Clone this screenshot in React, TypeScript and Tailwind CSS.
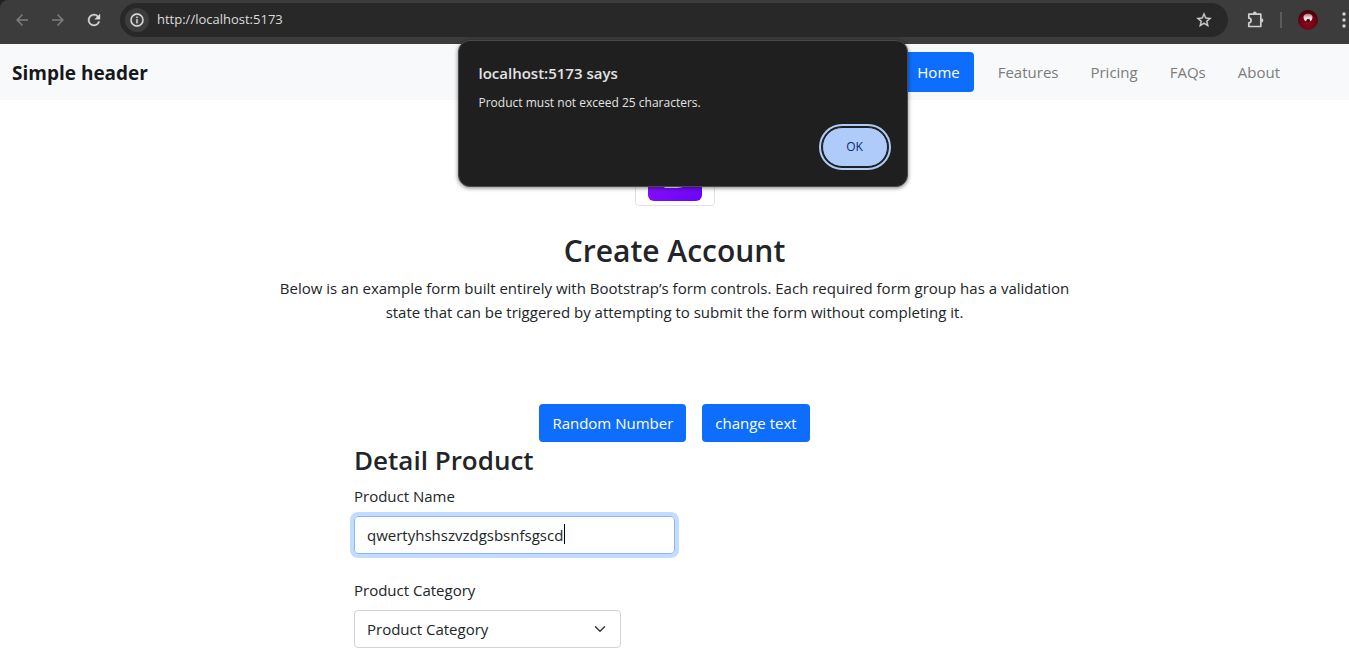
import { useState } from "react";

const navItems = ["Home", "Features", "Pricing", "FAQs", "About"];

function BackIcon() {
  return (
    <svg viewBox="0 0 24 24" className="size-[18px] fill-[#7d7d7d]" aria-hidden="true">
      <path d="M20 11H7.83l5.59-5.59L12 4l-8 8 8 8 1.41-1.41L7.83 13H20v-2z" />
    </svg>
  );
}

function ForwardIcon() {
  return (
    <svg viewBox="0 0 24 24" className="size-[18px] fill-[#7d7d7d]" aria-hidden="true">
      <path d="M12 4l-1.41 1.41L16.17 11H4v2h12.17l-5.58 5.59L12 20l8-8z" />
    </svg>
  );
}

function ReloadIcon() {
  return (
    <svg viewBox="0 0 24 24" className="size-[18px] fill-[#d8d8d8]" aria-hidden="true">
      <path d="M17.65 6.35A7.96 7.96 0 0 0 12 4a8 8 0 1 0 7.73 10h-2.08A6 6 0 1 1 12 6c1.66 0 3.14.69 4.22 1.78L13 11h7V4l-2.35 2.35z" stroke="#d8d8d8" strokeWidth="0.5" />
    </svg>
  );
}

function InfoIcon() {
  return (
    <svg viewBox="0 0 24 24" className="size-4 fill-[#dedede]" aria-hidden="true">
      <path d="M11 7h2v2h-2zm0 4h2v6h-2zm1-9a10 10 0 1 0 0 20 10 10 0 0 0 0-20zm0 18a8 8 0 1 1 0-16 8 8 0 0 1 0 16z" stroke="#dedede" strokeWidth="0.4" />
    </svg>
  );
}

function StarIcon() {
  return (
    <svg viewBox="0 0 24 24" className="size-[18px] fill-[#cfcfcf]" aria-hidden="true">
      <path d="M22 9.24l-7.19-.62L12 2 9.19 8.63 2 9.24l5.46 4.73L5.82 21 12 17.27 18.18 21l-1.63-7.03L22 9.24zM12 15.4l-3.76 2.27 1-4.28-3.32-2.88 4.38-.38L12 6.1l1.71 4.04 4.38.38-3.32 2.88 1 4.28L12 15.4z" stroke="#cfcfcf" strokeWidth="0.4" />
    </svg>
  );
}

function PuzzleIcon() {
  return (
    <svg viewBox="0 0 20 20" className="size-5" aria-hidden="true">
      <path
        d="M2.8 4.2h12v12.3h-12v-3.7a2.3 2.3 0 0 0 0-4.6z"
        fill="none"
        stroke="#cfcfcf"
        strokeWidth="1.7"
        strokeLinejoin="round"
      />
      <path d="M6.8 4a2 2.4 0 0 1 4 0zM15.2 8.3a2.2 2.1 0 0 1 0 4.2z" fill="#cfcfcf" />
    </svg>
  );
}

function AvatarIcon() {
  return (
    <svg viewBox="0 0 20 20" className="size-5" aria-hidden="true">
      <defs>
        <radialGradient id="orb" cx="50%" cy="65%" r="60%">
          <stop offset="0" stopColor="#8e0a1e" />
          <stop offset="0.7" stopColor="#6b0314" />
          <stop offset="1" stopColor="#42020b" />
        </radialGradient>
        <linearGradient id="shine" x1="0" y1="0" x2="0" y2="1">
          <stop offset="0" stopColor="#a8717c" />
          <stop offset="0.6" stopColor="#f4e6e8" />
        </linearGradient>
      </defs>
      <circle cx="10" cy="10" r="10" fill="url(#orb)" />
      <path d="M5.5 7C5.500 2.500 14.500 2.500 14.500 7 14.500 9.500 13 11.300 12 11L11.300 9 10.200 10 9.200 9 8 11C7 11.300 5.500 9.500 5.500 7z" fill="url(#shine)" />
      <path d="M9.200 8.800l.9 .7 1-.7 .3 1.200-1 2.500h-.6z" fill="#2c0107" />
    </svg>
  );
}

function MenuDotsIcon() {
  return (
    <svg viewBox="0 0 4 16" className="h-4 w-1 fill-[#cfcfcf]" aria-hidden="true">
      <circle cx="2" cy="2" r="1.7" />
      <circle cx="2" cy="8" r="1.7" />
      <circle cx="2" cy="14" r="1.7" />
    </svg>
  );
}

function BrowserBar() {
  return (
    <div className="bg-[#1f2020]">
      <div className="flex h-11 items-center overflow-hidden rounded-tl-lg bg-[#3c3c3c] pb-1 pl-[13px]">
        <div className="flex w-[107px] shrink-0 items-center gap-[18px]">
          <button type="button" aria-label="Back"><BackIcon /></button>
          <button type="button" aria-label="Forward"><ForwardIcon /></button>
          <button type="button" aria-label="Reload"><ReloadIcon /></button>
        </div>
        <div className="flex h-[34px] flex-1 items-center rounded-full bg-[#282828] pr-[15px] pl-[5px]">
          <button type="button" aria-label="Site information" className="mr-2 flex size-6 items-center justify-center rounded-full bg-[#3c3c3c]">
            <InfoIcon />
          </button>
          <input
            aria-label="Address"
            readOnly
            value="http://localhost:5173"
            className="min-w-0 flex-1 bg-transparent text-[13px] text-[#dcdcdc] outline-none"
          />
          <button type="button" aria-label="Bookmark this page"><StarIcon /></button>
        </div>
        <div className="ml-[18px] flex shrink-0 items-center">
          <button type="button" aria-label="Extensions"><PuzzleIcon /></button>
          <span className="mr-4 ml-3.5 h-4 w-0.5 bg-[#5c5c5c]" />
          <button type="button" aria-label="Profile"><AvatarIcon /></button>
          <button type="button" aria-label="Browser menu" className="mr-[3px] ml-6"><MenuDotsIcon /></button>
        </div>
      </div>
    </div>
  );
}

function SiteHeader() {
  return (
    <header className="flex h-14 items-center justify-between bg-[#f8f9fa] pr-[53px] pl-3">
      <a href="#home" className="pt-0.5 text-[19px] font-bold text-[#16181b]">Simple header</a>
      <nav className="flex items-center">
        {navItems.map((item, index) => (
          <a
            key={item}
            href={"#" + item.toLowerCase()}
            className={
              index === 0
                ? "mr-2 rounded bg-[#0d6efd] px-3.5 py-2 leading-6 text-white"
                : "px-4 py-2 leading-6 text-[#7c7c7c]"
            }
          >
            {item}
          </a>
        ))}
      </nav>
    </header>
  );
}

function AlertDialog() {
  return (
    <div
      role="alertdialog"
      aria-labelledby="alert-title"
      aria-describedby="alert-message"
      className="absolute top-10 left-1/2 flex w-[450px] -translate-x-[217px] flex-col rounded-xl border border-[#4a4a4a] bg-[#1f1f1f] px-5 pt-5 pb-[19px] shadow-[0_1px_4px_rgba(0,0,0,0.5)]"
    >
      <h2 id="alert-title" className="text-[15px] leading-6 font-semibold text-[#e3e3e3]">localhost:5173 says</h2>
      <p id="alert-message" className="mt-2 text-xs leading-5 text-[#e3e3e3]">Product must not exceed 25 characters.</p>
      <button
        type="button"
        className="mt-3.5 -mr-px h-10 w-[66px] self-end rounded-full border border-[#1f1f1f] bg-[#aecbfa] text-xs font-medium text-[#062e6f] outline-2 outline-offset-1 outline-[#aecbfa]"
      >
        OK
      </button>
    </div>
  );
}

function BootstrapLogo() {
  return (
    <svg viewBox="0 0 54 44" className="h-11 w-[54px]" aria-hidden="true">
      <defs>
        <linearGradient id="logo" x1="0" y1="0" x2="1" y2="1">
          <stop offset="0" stopColor="#9013fe" />
          <stop offset="1" stopColor="#6a05f8" />
        </linearGradient>
      </defs>
      <rect width="54" height="44" rx="6" fill="url(#logo)" />
      <path d="M18 9h11c8 0 9 9 3 10 8 2 7 10.500-3 10.500H18z" fill="none" stroke="#fff" strokeWidth="3" />
    </svg>
  );
}

export default function App() {
  const [name, setName] = useState("qwertyhshszvzdgsbsnfsgscd");
  const [category, setCategory] = useState("");

  return (
    <div className="relative min-h-screen overflow-hidden bg-white font-['Open_Sans',sans-serif] text-[15px] text-[#212529]">
      <BrowserBar />
      <SiteHeader />
      <main>
        <section className="mx-auto flex max-w-[820px] flex-col items-center px-3 pt-12 text-center">
          <div className="flex h-[58px] w-20 items-end justify-center rounded border border-[#dee2e6] pb-1">
            <BootstrapLogo />
          </div>
          <h1 className="mt-[26px] text-[30px] leading-[38px] font-semibold">Create Account</h1>
          <p className="mt-1.5 leading-6">
            Below is an example form built entirely with Bootstrap’s form controls. Each required form group has a validation state that can be triggered by attempting to submit the form without completing it.
          </p>
        </section>
        <div className="mt-20 flex justify-center gap-4">
          <button type="button" className="rounded bg-[#0d6efd] px-[13px] py-[7px] leading-6 text-white">Random Number</button>
          <button type="button" className="rounded bg-[#0d6efd] px-[13px] py-[7px] leading-6 text-white">change text</button>
        </div>
        <form className="mx-auto w-full max-w-[641px]">
          <h2 className="mb-1.5 text-[26px] leading-9 font-semibold">Detail Product</h2>
          <label htmlFor="product-name" className="block leading-6">Product Name</label>
          <div className="relative mt-2 w-1/2">
            <input
              id="product-name"
              type="text"
              value={name}
              onChange={(event) => setName(event.target.value)}
              className="block h-[38px] w-full rounded border border-[#86b7fe] px-3 ring-4 ring-[#c2dbfe] outline-none"
            />
            <span className="absolute top-2 left-[210px] h-5 w-px bg-black" />
          </div>
          <label htmlFor="product-category" className="mt-6 block leading-6">Product Category</label>
          <div className="relative mt-2 w-5/12">
            <select
              id="product-category"
              value={category}
              onChange={(event) => setCategory(event.target.value)}
              className="block h-[38px] w-full appearance-none rounded border border-[#ced4da] bg-white px-3"
            >
              <option value="">Product Category</option>
            </select>
            <svg viewBox="0 0 16 16" className="pointer-events-none absolute top-[13px] right-[15px] size-3" aria-hidden="true">
              <path d="m2 5 6 6 6-6" fill="none" stroke="#343a40" strokeWidth="2" strokeLinecap="round" strokeLinejoin="round" />
            </svg>
          </div>
        </form>
      </main>
      <AlertDialog />
    </div>
  );
}
